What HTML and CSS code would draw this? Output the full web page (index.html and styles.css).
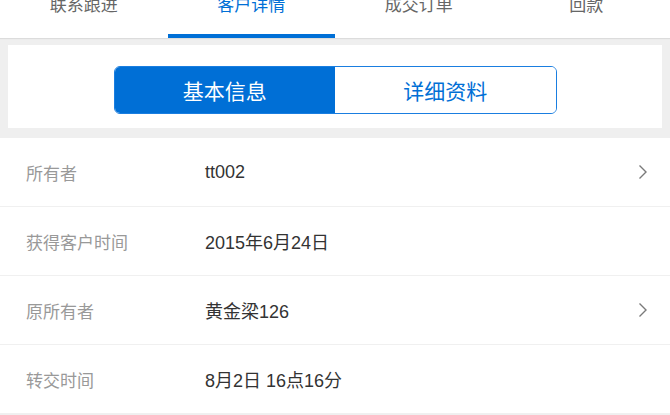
FILE: index.html
```html
<!DOCTYPE html>
<html lang="zh-CN">
  <head>
    <meta charset="UTF-8" />
    <meta name="viewport" content="width=device-width, initial-scale=1.0" />
    <title>客户详情</title>
    <link rel="stylesheet" href="styles.css">
  </head>
  <body>
    <nav class="tabs">
      <div class="tab">联系跟进</div>
      <div class="tab active">客户详情</div>
      <div class="tab">成交订单</div>
      <div class="tab">回款</div>
    </nav>
    <section class="switch-card">
      <div class="switch">
        <div class="switch-item on">基本信息</div>
        <div class="switch-item">详细资料</div>
      </div>
    </section>
    <ul class="info-list">
      <li class="info-row">
        <span class="info-label">所有者</span>
        <span class="info-value">tt002</span>
        <svg class="arrow" width="10" height="16" viewBox="0 0 10 16"><path d="M1.5 1.5 L8 8 L1.5 14.5" fill="none" stroke="#7a7a7a" stroke-width="1.4"/></svg>
      </li>
      <li class="info-row">
        <span class="info-label">获得客户时间</span>
        <span class="info-value">2015年6月24日</span>
      </li>
      <li class="info-row">
        <span class="info-label">原所有者</span>
        <span class="info-value">黄金梁126</span>
        <svg class="arrow" width="10" height="16" viewBox="0 0 10 16"><path d="M1.5 1.5 L8 8 L1.5 14.5" fill="none" stroke="#7a7a7a" stroke-width="1.4"/></svg>
      </li>
      <li class="info-row">
        <span class="info-label">转交时间</span>
        <span class="info-value">8月2日 16点16分</span>
      </li>
    </ul>
  </body>
</html>
```

FILE: styles.css
```css
body {
  margin: 0;
  background-color: #efefef;
  font-family: "Liberation Sans", "Noto Sans CJK SC", sans-serif;
  overflow: hidden;
}
.tabs {
  display: flex;
  height: 38px;
  background-color: #fff;
  box-shadow: 0 1px 1px rgba(0, 0, 0, 0.08);
}
.tab {
  flex: 1;
  box-sizing: border-box;
  height: 38px;
  line-height: 12px;
  text-align: center;
  font-size: 17px;
  color: #666;
}
.tab.active {
  color: #006fd6;
  border-bottom: 4px solid #006fd6;
}
.switch-card {
  margin: 7px 8px 10px;
  padding: 21px 0 14px;
  background-color: #fff;
  display: flex;
  justify-content: center;
}
.switch {
  display: flex;
  width: 443px;
  height: 48px;
  box-sizing: border-box;
  border: 1px solid #1a7ee0;
  border-radius: 6px;
  overflow: hidden;
}
.switch-item {
  flex: 1;
  display: flex;
  align-items: center;
  justify-content: center;
  font-size: 21px;
  color: #006fd6;
  background-color: #fff;
}
.switch-item.on {
  color: #fff;
  background-color: #006fd6;
}
.info-list {
  margin: 0;
  padding: 0;
  list-style: none;
  background-color: #fff;
}
.info-row {
  display: flex;
  align-items: center;
  height: 68px;
  padding: 0 22px 0 26px;
  border-bottom: 1px solid #f0f0f0;
  font-size: 17px;
}
.info-label {
  width: 179px;
  color: #999;
}
.info-value {
  flex: 1;
  font-size: 18px;
  color: #333;
}
```
